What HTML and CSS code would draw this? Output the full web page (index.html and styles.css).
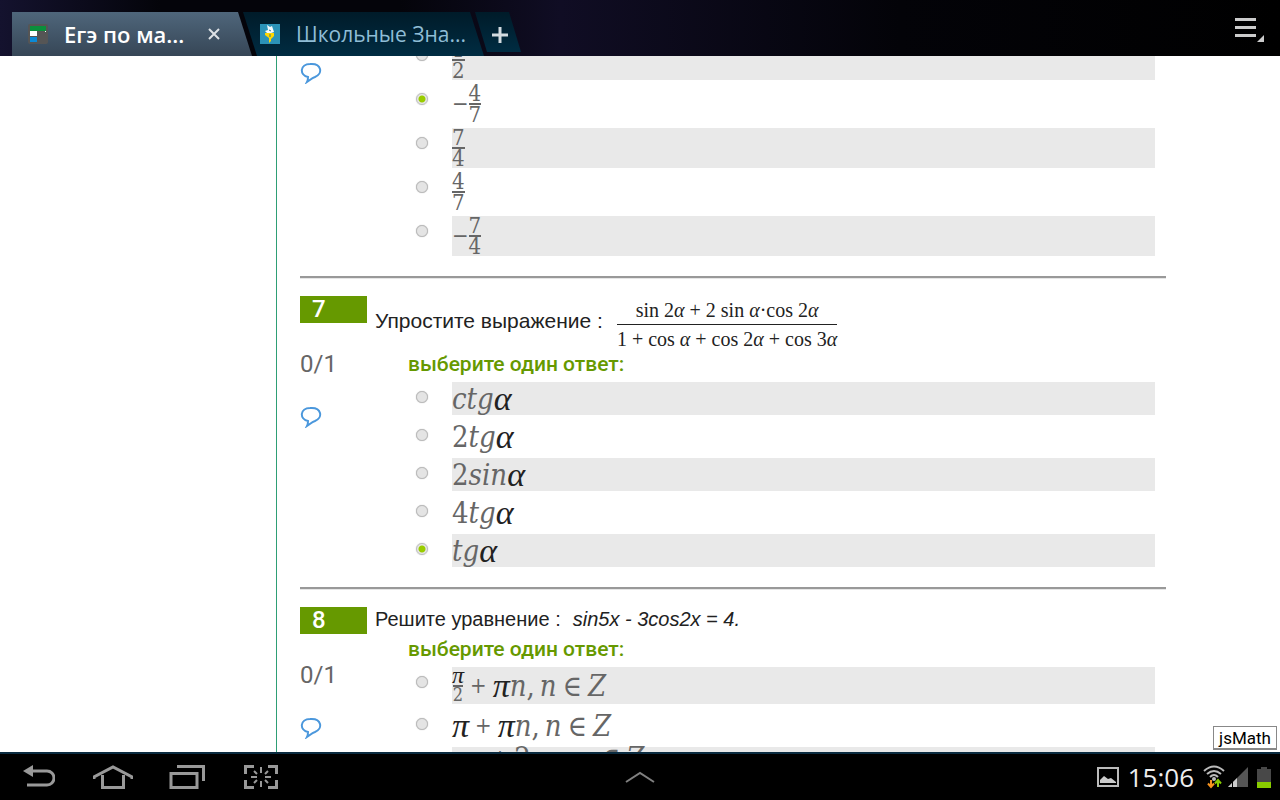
FILE: index.html
```html
<!DOCTYPE html>
<html lang="ru">
	<head>
		<meta charset="utf-8">
		<title>Егэ по математике</title>
		<link rel="stylesheet" href="styles.css">
	</head>
	<body>

		<header class="barraTabs">
			<nav class="tabs">
				<div class="tab activa">
					<svg class="favicon" viewBox="0 0 20 20" width="20" height="20">
						<rect width="20" height="20" rx="2" fill="#555"/>
						<rect x="2" y="2" width="16" height="5" fill="#0a8f3c"/>
						<rect x="2" y="7" width="7" height="5" fill="#fff"/>
						<rect x="2" y="13" width="7" height="5" fill="#0c8ad6"/>
						<rect x="17" y="7" width="1" height="1" fill="#fff"/>
					</svg>
					<a href="#ege">Егэ по ма...</a>
					<button class="cerrar" aria-label="Закрыть">
						<svg viewBox="0 0 12 12" width="12" height="12"><path d="M1 1 L11 11 M11 1 L1 11" stroke="#dde1e5" stroke-width="2"/></svg>
					</button>
				</div>
				<div class="tab segunda">
					<svg class="favicon" viewBox="0 0 20 20" width="20" height="20">
						<rect width="20" height="20" fill="#2b93b8"/>
						<path d="M5 9 L14 9 L14 12 L11 15 L11 17 L9 19 L9 14 L5 11 Z" fill="#ffd800"/>
						<path d="M7 1 L10 3 L12 2 L13 5 L14 8 L11 9 L7 9 L5 7 L8 6 Z" fill="#f4fafc"/>
						<path d="M9 6 L11 7 M10 10 L10 13" stroke="#2b7793"/>
					</svg>
					<a href="#znania">Школьные Зна...</a>
				</div>
				<button class="tabNueva" aria-label="Новая вкладка">
					<svg viewBox="0 0 18 18" width="18" height="18"><path d="M9 1 V17 M1 9 H17" stroke="#d3dbe0" stroke-width="3"/></svg>
				</button>
			</nav>
			<button class="botonMenu" aria-label="Меню">
				<svg viewBox="0 0 30 26" width="30" height="26">
					<path d="M0 2.5 H21 M0 10.5 H21 M0 18.5 H21" stroke="#ccc" stroke-width="3"/>
					<path d="M29 18 V25 H22 Z" fill="#ccc"/>
				</svg>
			</button>
		</header>

		<main class="pagina">
			<aside class="margen"></aside>

			<div class="preguntas">

				<section class="pregunta cortada">
					<div class="info">
						<a class="comentario" href="#c6" aria-label="Комментарий">
							<svg viewBox="0 0 22 22" width="22" height="22"><path d="M8 15 C-1 13 0 2 10 2 C22 1 23 12 15 15 C12 16 10 18 7 20 C8 18 8 17 8 15 Z" fill="none" stroke="#4a97dc" stroke-width="2"/></svg>
						</a>
					</div>
					<div class="cuerpo">
						<ul class="opciones fracciones">
							<li><input type="radio" name="p6" id="p6a"><label for="p6a"><span class="frac"><span>1</span><span>2</span></span></label></li>
							<li><input type="radio" name="p6" id="p6b" checked><label for="p6b"><span class="menos">−</span><span class="frac"><span>4</span><span>7</span></span></label></li>
							<li><input type="radio" name="p6" id="p6c"><label for="p6c"><span class="frac"><span>7</span><span>4</span></span></label></li>
							<li><input type="radio" name="p6" id="p6d"><label for="p6d"><span class="frac"><span>4</span><span>7</span></span></label></li>
							<li><input type="radio" name="p6" id="p6e"><label for="p6e"><span class="menos">−</span><span class="frac"><span>7</span><span>4</span></span></label></li>
						</ul>
					</div>
				</section>

				<hr>

				<section class="pregunta">
					<div class="info">
						<div class="numero">7</div>
						<div class="puntos">0/1</div>
						<a class="comentario" href="#c7" aria-label="Комментарий">
							<svg viewBox="0 0 22 22" width="22" height="22"><path d="M8 15 C-1 13 0 2 10 2 C22 1 23 12 15 15 C12 16 10 18 7 20 C8 18 8 17 8 15 Z" fill="none" stroke="#4a97dc" stroke-width="2"/></svg>
						</a>
					</div>
					<div class="cuerpo">
						<div class="enunciado">
							<span>Упростите выражение :</span>
							<span class="formula">
								<span>sin 2<i>α</i> + 2 sin <i>α</i>·cos 2<i>α</i></span>
								<span>1 + cos <i>α</i> + cos 2<i>α</i> + cos 3<i>α</i></span>
							</span>
						</div>
						<p class="elige">выберите один ответ:</p>
						<ul class="opciones">
							<li><input type="radio" name="p7" id="p7a"><label for="p7a"><i>ctg</i><b>α</b></label></li>
							<li><input type="radio" name="p7" id="p7b"><label for="p7b">2<i>tg</i><b>α</b></label></li>
							<li><input type="radio" name="p7" id="p7c"><label for="p7c">2<i>sin</i><b>α</b></label></li>
							<li><input type="radio" name="p7" id="p7d"><label for="p7d">4<i>tg</i><b>α</b></label></li>
							<li><input type="radio" name="p7" id="p7e" checked><label for="p7e"><i>tg</i><b>α</b></label></li>
						</ul>
					</div>
				</section>

				<hr>

				<section class="pregunta">
					<div class="info">
						<div class="numero">8</div>
						<div class="puntos">0/1</div>
						<a class="comentario" href="#c8" aria-label="Комментарий">
							<svg viewBox="0 0 22 22" width="22" height="22"><path d="M8 15 C-1 13 0 2 10 2 C22 1 23 12 15 15 C12 16 10 18 7 20 C8 18 8 17 8 15 Z" fill="none" stroke="#4a97dc" stroke-width="2"/></svg>
						</a>
					</div>
					<div class="cuerpo">
						<div class="enunciado corto">
							<span>Решите уравнение :</span>
							<i>sin5x - 3cos2x = 4.</i>
						</div>
						<p class="elige">выберите один ответ:</p>
						<ul class="opciones">
							<li class="alta"><input type="radio" name="p8" id="p8a"><label for="p8a"><span class="frac chica"><span><b>π</b></span><span>2</span></span><span class="mas">+</span><b>π</b><i>n</i>,<i class="ene">n</i><span class="en">∈</span><i>Z</i></label></li>
							<li><input type="radio" name="p8" id="p8b"><label for="p8b"><b>π</b><span class="mas">+</span><b>π</b><i>n</i>,<i class="ene">n</i><span class="en">∈</span><i>Z</i></label></li>
							<li class="ultima"><input type="radio" name="p8" id="p8c"><label for="p8c"><span class="menos">−</span><b>π</b><span class="mas">+</span>2<b>π</b><i>n</i>,<i class="ene">n</i><span class="en">∈</span><i>Z</i></label></li>
						</ul>
					</div>
				</section>

			</div>

			<button class="jsmath">jsMath</button>
		</main>

		<footer class="barraSistema">
			<div class="navegacion">
				<button aria-label="Назад">
					<svg viewBox="0 0 32 24" width="32" height="24">
						<path d="M8 6 H24 A7 7 0 0 1 24 20 H4" fill="none" stroke="#999" stroke-width="3"/>
						<path d="M0 6 L10 0 V12 Z" fill="#999"/>
					</svg>
				</button>
				<button aria-label="Домой">
					<svg viewBox="0 0 40 24" width="40" height="24"><path d="M1 14 V12 L20 2 L39 12 V14 M9.5 10 V22.5 H30.5 V10" fill="none" stroke="#999" stroke-width="3"/></svg>
				</button>
				<button aria-label="Недавние">
					<svg viewBox="0 0 36 24" width="36" height="24"><path d="M2 8.5 H28 V22.5 H2 Z M8 1.5 H34.5 V16" fill="none" stroke="#999" stroke-width="3"/></svg>
				</button>
				<button aria-label="Снимок">
					<svg viewBox="0 0 34 24" width="34" height="24">
						<path d="M1.5 9 V1.5 H10 M24 1.5 H32.5 V9 M32.5 15 V22.5 H24 M10 22.5 H1.5 V15" fill="none" stroke="#999" stroke-width="3"/>
						<path d="M17 2 V8 M17 16 V22 M7 12 H13 M21 12 H27 M10 6 L13 9 M24 6 L21 9 M10 18 L13 15 M24 18 L21 15" stroke="#999" stroke-width="2"/>
					</svg>
				</button>
			</div>
			<button class="subir" aria-label="Вверх">
				<svg viewBox="0 0 30 12" width="30" height="12"><path d="M1 11 L15 2 L29 11" fill="none" stroke="#808080" stroke-width="2"/></svg>
			</button>
			<div class="estado">
				<svg viewBox="0 0 22 20" width="22" height="20">
					<rect x="1" y="1" width="20" height="18" fill="none" stroke="#bbb" stroke-width="2"/>
					<path d="M3 16 V13 L7 9 L11 12 L14 11 L19 15 V16 Z" fill="#ccc"/>
				</svg>
				<span class="hora">15:06</span>
				<svg class="wifi" viewBox="0 0 22 24" width="22" height="24">
					<path d="M1 6 Q11 -3 21 6 M4 9 Q11 3 18 9 M7 12 Q11 8 15 12" fill="none" stroke="#bbb" stroke-width="2"/>
					<circle cx="11" cy="14" r="2" fill="#bbb"/>
					<path d="M8 15 V22 M5 18.5 L8 22 L11 18.5" fill="none" stroke="#f7931e" stroke-width="2"/>
					<path d="M15 22 V15 M12 18.5 L15 15 L18 18.5" fill="none" stroke="#8c0" stroke-width="2"/>
				</svg>
				<svg viewBox="0 0 20 20" width="20" height="20">
					<path d="M0 20 L20 0 V20 Z" fill="#555"/>
					<path d="M0 20 L9 11 V20 Z" fill="#ccc"/>
					<path d="M4.5 12 V20" stroke="#000"/>
				</svg>
				<svg class="bateria" viewBox="0 0 14 21" width="14" height="21">
					<path d="M4 0 H10 V2 H14 V21 H0 V2 H4 Z" fill="#484848"/>
					<rect y="15" width="14" height="6" fill="#8c0"/>
				</svg>
			</div>
		</footer>

	</body>
</html>
```

FILE: styles.css
```css
body {
	margin: 0;
	height: 100vh;
	display: flex;
	flex-direction: column;
	overflow: hidden;
	background-color: white;
	font-family: Roboto, sans-serif;
	color: #666;
}
button {
	border: none;
	background: none;
	padding: 0;
	display: flex;
	align-items: center;
	justify-content: center;
}
a {
	color: inherit;
	text-decoration: none;
}

/* pestañas */
.barraTabs {
	height: 56px;
	flex: none;
	display: flex;
	justify-content: space-between;
	align-items: flex-end;
	background: linear-gradient(to right, #14122e 0, #04040a 160px, #04040a 400px, #100d24 560px, #030308 900px, #000 100%);
}
.tabs {
	display: flex;
	padding-left: 12px;
}
.tab {
	height: 44px;
	display: flex;
	align-items: center;
	box-sizing: border-box;
	font-family: "Open Sans", sans-serif;
	font-size: 22px;
	white-space: nowrap;
}
.tab a {
	flex: 1;
}
.favicon {
	margin-right: 16px;
}
.activa {
	width: 240px;
	padding-left: 16px;
	padding-right: 32px;
	color: white;
	font-weight: 600;
	background: linear-gradient(#4f667b, #364656);
	clip-path: polygon(0 0, 226px 0, 100% 100%, 0 100%);
}
.segunda {
	width: 241px;
	margin-left: -9px;
	padding-left: 17px;
	color: #8fbdd6;
	font-size: 21px;
	background: linear-gradient(#001b29, #002c42);
	clip-path: polygon(0 0, 227px 0, 100% 100%, 14px 100%);
}
.tabNueva {
	width: 46px;
	height: 40px;
	margin-left: -9px;
	align-self: flex-start;
	padding-top: 6px;
	padding-left: 3px;
	background: linear-gradient(#001b29, #002c42);
	clip-path: polygon(0 0, 34px 0, 100% 100%, 12px 100%);
}
.botonMenu {
	padding-right: 15px;
	padding-bottom: 13px;
}

/* contenido */
.pagina {
	flex: 1;
	min-height: 0;
	overflow: hidden;
	position: relative;
	display: flex;
}
.margen {
	width: 276px;
	flex: none;
	border-right: 1px solid #2e9e75;
}
.preguntas {
	flex: 1;
	padding-left: 23px;
	padding-right: 114px;
}
.pregunta {
	display: grid;
	grid-template-columns: 75px 1fr;
}
.cortada {
	margin-top: -16px;
}
.cortada .info {
	padding-top: 22px;
}
.info {
	display: flex;
	flex-direction: column;
	align-items: flex-start;
}
.numero {
	width: 55px;
	height: 27px;
	line-height: 27px;
	padding-left: 12px;
	background-color: #690;
	color: white;
	font-size: 24px;
	font-weight: 500;
}
.puntos {
	margin-top: 27px;
	margin-bottom: 28px;
	line-height: 28px;
	font-size: 24px;
}
.comentario {
	height: 22px;
}
hr {
	margin: 20px 0 17px;
	border: none;
	height: 2px;
	background-color: #999;
	border-bottom: 1px solid #e6e6e6;
}
.enunciado {
	height: 56px;
	display: flex;
	align-items: flex-start;
	gap: 14px;
	font-family: "Liberation Sans", sans-serif;
	font-size: 21px;
	line-height: 50px;
	color: #222;
	white-space: nowrap;
}
.corto {
	height: 30px;
	line-height: 24px;
	gap: 12px;
	font-size: 20px;
}
.formula {
	font-family: "Liberation Serif", serif;
	font-size: 20px;
	text-align: center;
}
.formula > span {
	display: block;
	line-height: 28px;
}
.formula > span + span {
	border-top: 1px solid #222;
}
.elige {
	margin: 0 0 6px 33px;
	line-height: 24px;
	font-size: 21px;
	font-weight: 500;
	color: #690;
}
.opciones {
	list-style: none;
	margin: 0 11px 0 41px;
	padding: 0;
	display: flex;
	flex-direction: column;
	gap: 5px;
}
.opciones li {
	height: 33px;
	display: flex;
	align-items: flex-start;
}
.opciones input {
	appearance: none;
	flex: none;
	width: 12px;
	height: 12px;
	margin: 9px 24px 0 0;
	border: 1px solid #bbb;
	border-radius: 50%;
	background-color: #e4e4e4;
	box-shadow: 0 0 1px #aaa;
}
.opciones input:checked {
	background: radial-gradient(circle, #9c0 0, #9c0 3px, #e8e8e8 4px);
}
.opciones label {
	flex: 1;
	height: 100%;
	display: flex;
	align-items: center;
	font-family: "DejaVu Serif Condensed", "DejaVu Serif", serif;
	font-size: 29px;
	line-height: 30px;
}
.opciones li:nth-child(odd) label {
	background-color: #e9e9e9;
}
.opciones b {
	font-family: "Liberation Serif", serif;
	font-weight: normal;
	font-style: italic;
	font-size: 34px;
	color: #222;
}
.opciones .alta {
	height: 37px;
}
.opciones .ultima label {
	align-items: flex-start;
	line-height: 22px;
}
.opciones.fracciones {
	gap: 4px;
}
.opciones.fracciones li {
	height: 40px;
}
.frac {
	display: flex;
	flex-direction: column;
	align-items: center;
	font-size: 22px;
	line-height: 19px;
}
.frac span + span {
	border-top: 2px solid #666;
}
.chica {
	font-size: 18px;
	line-height: 16px;
}
.opciones .chica b {
	font-size: 24px;
	line-height: 12px;
}
.menos {
	font-size: 22px;
}
.mas {
	font-size: 22px;
	margin: 0 6px;
}
.ene {
	margin-left: 5px;
}
.en {
	margin: 0 6px;
}
.jsmath {
	position: absolute;
	right: 3px;
	bottom: 2px;
	width: 64px;
	height: 24px;
	border: 1px solid #888;
	border-bottom-width: 2px;
	background-color: white;
	color: black;
	font-family: Roboto, sans-serif;
	font-size: 17px;
}

/* barra de abajo */
.barraSistema {
	height: 46px;
	flex: none;
	display: grid;
	grid-template-columns: 1fr auto 1fr;
	align-items: center;
	background-color: black;
	border-top: 2px solid #0a2b40;
}
.navegacion {
	display: flex;
	padding-left: 2px;
}
.navegacion button {
	width: 74px;
	height: 46px;
}
.estado {
	display: flex;
	justify-content: flex-end;
	align-items: center;
	gap: 9px;
	padding-right: 9px;
}
.wifi {
	margin-right: -6px;
}
.hora {
	font-family: "Open Sans", sans-serif;
	font-size: 26px;
	line-height: 30px;
	color: #eee;
}
```
